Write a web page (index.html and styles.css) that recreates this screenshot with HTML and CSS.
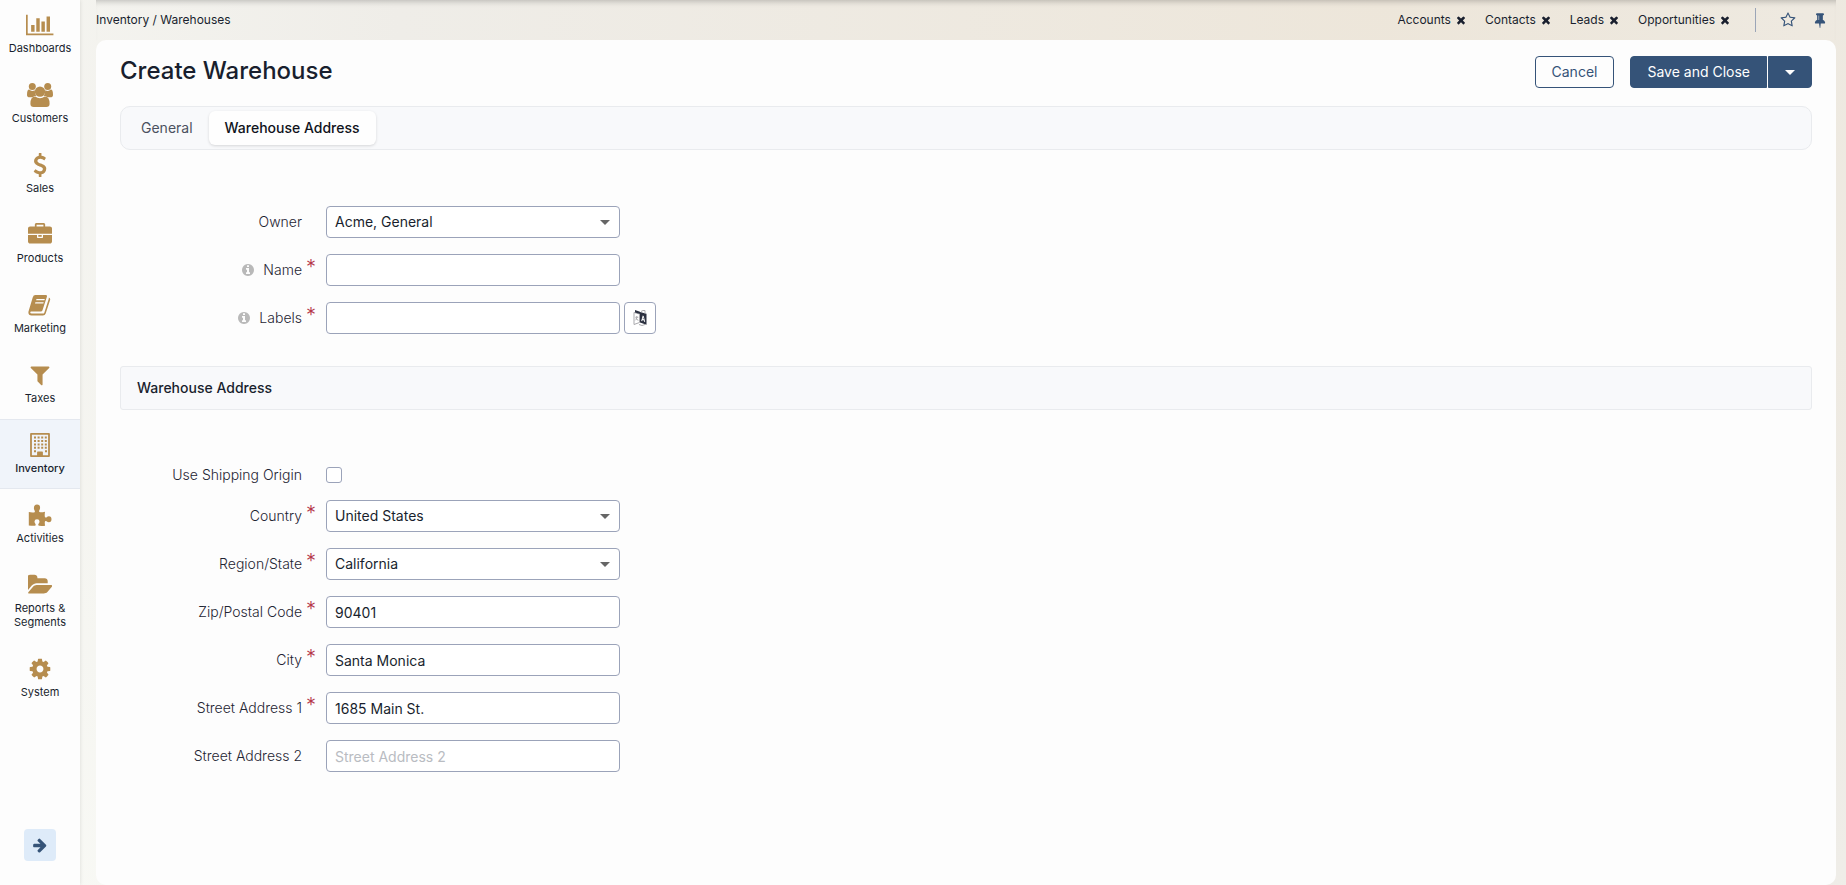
FILE: index.html
```html
<!DOCTYPE html>
<html lang="en">
<head>
    <meta charset="UTF-8">
    <meta name="viewport" content="width=device-width, initial-scale=1.0">
    <title>Create Warehouse</title>
    <link rel="stylesheet" href="styles.css">
</head>
<body>
    <!-- Icons used more than once -->
    <svg class="sprite" aria-hidden="true">
        <symbol id="times" viewBox="0 0 1792 1792"><path d="M1490 1322q0 40-28 68l-136 136q-28 28-68 28t-68-28l-294-294-294 294q-28 28-68 28t-68-28l-136-136q-28-28-28-68t28-68l294-294-294-294q-28-28-28-68t28-68l136-136q28-28 68-28t68 28l294 294 294-294q28-28 68-28t68 28l136 136q28 28 28 68t-28 68l-294 294 294 294q28 28 28 68z"/></symbol>
        <symbol id="info" viewBox="0 0 1792 1792"><path d="M1152 1376v-160q0-14-9-23t-23-9h-96v-512q0-14-9-23t-23-9h-320q-14 0-23 9t-9 23v160q0 14 9 23t23 9h96v320h-96q-14 0-23 9t-9 23v160q0 14 9 23t23 9h448q14 0 23-9t9-23zm-128-896v-160q0-14-9-23t-23-9h-192q-14 0-23 9t-9 23v160q0 14 9 23t23 9h192q14 0 23-9t9-23zm640 416q0 209-103 385.5t-279.5 279.5-385.5 103-385.5-103-279.5-279.5-103-385.5 103-385.5 279.5-279.5 385.5-103 385.5 103 279.5 279.5 103 385.5z"/></symbol>
    </svg>

    <nav class="sidebar">
        <ul class="menu">
            <li><a href="#" class="menu-item">
                <svg class="menu-icon" viewBox="0 0 2048 1792"><path d="M640 896v512h-256v-512h256zm384-512v1024h-256v-1024h256zm1024 1152v128h-2048v-1536h128v1408h1920zm-640-896v768h-256v-768h256zm384-384v1152h-256v-1152h256z"/></svg>
                <span>Dashboards</span>
            </a></li>
            <li><a href="#" class="menu-item">
                <svg class="menu-icon" viewBox="0 0 26 24"><circle cx="5.300" cy="3.600" r="3.500"/><circle cx="20.700" cy="3.600" r="3.500"/><path d="M2.200 6.600Q3.600 7.900 5.300 7.900q1.200 0 2.500-.6-.2 3.200 1.400 5.400-2 .1-3.600 1.600H2.700Q0 14.300 0 12 0 6.600 2.200 6.600zM23.800 6.600q-1.400 1.300-3.100 1.300-1.200 0-2.500-.6.200 3.200-1.400 5.400 2 .1 3.600 1.600h2.900q2.700 0 2.700-2.300 0-5.400-2.200-5.400z"/><circle cx="13" cy="8.600" r="5.200"/><path d="M8.300 13.500q2.200 1.800 4.700 1.800t4.700-1.800q4.900 0 4.900 7.300 0 3.200-3.300 3.200H6.700q-3.300 0-3.300-3.200 0-7.300 4.900-7.300z"/></svg>
                <span>Customers</span>
            </a></li>
            <li><a href="#" class="menu-item">
                <svg class="menu-icon" viewBox="0 0 1792 1792"><path d="M1362 1185q0 153-99.500 263.500t-258.500 136.500v175q0 14-9 23t-23 9h-135q-13 0-22.500-9.500t-9.500-22.500v-175q-66-9-127.500-31t-101.500-44.500-74-48-46.500-37.500-17.500-18q-17-21-2-41l103-135q7-10 23-12 15-2 24 9l2 2q113 99 243 125 37 8 74 8 81 0 142.500-43t61.500-122q0-28-15-53t-33.500-42-58.500-37.500-66-32-80-32.500q-39-16-61.500-25t-61.500-26.500-62.500-31-56.500-35.500-53.500-42.500-43.500-49-35.500-58-21-66.500-8.500-78q0-138 98-242t255-134v-180q0-13 9.500-22.500t22.500-9.500h135q14 0 23 9t9 23v176q57 6 110.500 23t87 33.500 63.500 37.500 39 29 15 14q17 18 5 38l-81 146q-8 15-23 16-14 3-27-7-3-3-14.500-12t-39-26.500-58.500-32-74.500-26-85.500-11.500q-95 0-155 43t-60 111q0 26 8.500 48t29.500 41.500 39.500 33 56 31 60.500 27 70 27.500q53 20 81 31.500t76 35 75.500 42.500 62 50 53 63.500 31.500 76.500 13 94z"/></svg>
                <span>Sales</span>
            </a></li>
            <li><a href="#" class="menu-item">
                <svg class="menu-icon" viewBox="0 0 1792 1792"><path d="M640 256h512v-128h-512v128zm1152 640v480q0 66-47 113t-113 47h-1472q-66 0-113-47t-47-113v-480h672v160q0 26 19 45t45 19h320q26 0 45-19t19-45v-160h672zm-768 0v128h-256v-128h256zm768-480v384h-1792v-384q0-66 47-113t113-47h352v-160q0-40 28-68t68-28h576q40 0 68 28t28 68v160h352q66 0 113 47t47 113z"/></svg>
                <span>Products</span>
            </a></li>
            <li><a href="#" class="menu-item">
                <svg class="menu-icon" viewBox="0 0 24 24"><path fill-rule="evenodd" d="M7.400 2h10.300q1.700 0 1.200 1.700l-4.400 13.600q-.4 1.200-1.800 1.200H3.200q-1 0-1 .8 0 1.300 1.600 1.300h11.200q1 0 1.300-.9L20.700 6q.2-.7.100-1.400 1.800.6 1.300 2.300l-4.400 13.500q-.7 2.100-2.800 2.100H3.600q-3.800 0-3.100-4.100L4.700 4.400Q5.400 2 7.400 2zM8.500 6l-.4 1.300h8.300l.4-1.300zM7.400 9.200 7 10.500h8.300l.4-1.300z"/></svg>
                <span>Marketing</span>
            </a></li>
            <li><a href="#" class="menu-item">
                <svg class="menu-icon" viewBox="0 0 1792 1792"><path d="M1595 295q17 41-14 70l-493 493v742q0 42-39 59-13 5-25 5-27 0-45-19l-256-256q-19-19-19-45v-486l-493-493q-31-29-14-70 17-39 59-39h1280q42 0 59 39z"/></svg>
                <span>Taxes</span>
            </a></li>
            <li><a href="#" class="menu-item active">
                <svg class="menu-icon" viewBox="0 0 24 24"><path fill-rule="evenodd" d="M3 0h18q.9 0 .9.900v22.200q0 .9-.9.900H3q-.9 0-.9-.900V.9Q2.100 0 3 0zM3.900 1.700v20.600h5.200v-3q0-.7.700-.7h4.400q.7 0 .7.700v3h5.200V1.700z"/><path class="windows" d="M6 4.600h13M6 8h13M6 11.400h13M6 14.800h13M6 18.200h2M17 18.200h2"/></svg>
                <span>Inventory</span>
            </a></li>
            <li><a href="#" class="menu-item">
                <svg class="menu-icon" viewBox="0 0 24 24"><path d="M.8 9.100q2.800.6 5.100.3 1.300-.2.900-1.500-.9-1.400-.9-2.600Q5.900 1.600 9 1.600t3.100 3.200q0 1.300-.9 2.600-.6 1.800 1.200 1.800 2.500 0 4.600-.5-.4 2.500-.2 4.800.1 1.400 1.600.9 1.300-1.100 2.500-1.100 2.600 0 2.600 3t-2.600 3q-1.300 0-2.300-1-1.700-.7-1.800 1-.1 1.700.3 3.400-3 .3-5.800.1-1.400-.2-.9-1.700 1.100-1.400 1.100-2.600 0-2.300-2.500-2.300t-2.500 2.300q0 1.300 1 2.600.6 1.600-.8 1.700-2.900.2-5.900-.4z"/></svg>
                <span>Activities</span>
            </a></li>
            <li><a href="#" class="menu-item">
                <svg class="menu-icon" viewBox="0 0 1856 1792"><path d="M1815 952q0 31-31 66l-336 396q-43 51-120.500 86.500t-143.500 35.500h-1088q-34 0-60.500-13t-26.500-43q0-31 31-66l336-396q43-51 120.500-86.500t143.500-35.500h1088q34 0 60.500 13t26.500 43zm-343-344v160h-832q-94 0-197 47.500t-164 119.500l-337 396-5 6q0-4-.5-12.500t-.5-12.500v-960q0-92 66-158t158-66h320q92 0 158 66t66 158v32h544q92 0 158 66t66 158z"/></svg>
                <span>Reports &amp; Segments</span>
            </a></li>
            <li><a href="#" class="menu-item">
                <svg class="menu-icon" viewBox="0 0 1792 1792"><path d="M1152 896q0-106-75-181t-181-75-181 75-75 181 75 181 181 75 181-75 75-181zm512-109v222q0 12-8 23t-20 13l-185 28q-19 54-39 91 35 50 107 138 10 12 10 25t-9 23q-27 37-99 108t-94 71q-12 0-26-9l-138-108q-44 23-91 38-16 136-29 186-7 28-36 28h-222q-14 0-24.500-8.500t-11.500-21.500l-28-184q-49-16-90-37l-141 107q-10 9-25 9-14 0-25-11-126-114-165-168-7-10-7-23 0-12 8-23 15-21 51-66.500t54-70.500q-27-50-41-99l-183-27q-13-2-21-12.500t-8-23.500v-222q0-12 8-23t19-13l186-28q14-46 39-92-40-57-107-138-10-12-10-24 0-10 9-23 26-36 98.500-107.500t94.500-71.500q13 0 26 10l138 107q44-23 91-38 16-136 29-186 7-28 36-28h222q14 0 24.500 8.500t11.500 21.500l28 184q49 16 90 37l142-107q9-9 24-9 13 0 25 10 129 119 165 170 7 8 7 22 0 12-8 23-15 21-51 66.500t-54 70.500q26 50 41 98l183 28q13 2 21 12.500t8 23.500z"/></svg>
                <span>System</span>
            </a></li>
        </ul>
        <button type="button" class="expand" aria-label="Expand menu">
            <svg viewBox="0 0 1792 1792"><path d="M1600 960q0 54-37 91l-651 651q-39 37-91 37-51 0-90-37l-75-75q-38-38-38-91t38-91l293-293h-704q-52 0-84.500-37.500t-32.500-90.500v-128q0-53 32.500-90.500t84.500-37.500h704l-293-294q-38-36-38-90t38-90l75-75q38-38 90-38 53 0 91 38l651 651q37 35 37 90z"/></svg>
        </button>
    </nav>

    <div class="page">
        <header class="topbar">
            <div class="breadcrumb"><a href="#">Inventory</a> / <a href="#">Warehouses</a></div>
            <div class="pins">
                <span class="pin"><a href="#">Accounts</a><button type="button" aria-label="Close Accounts"><svg><use href="#times"/></svg></button></span>
                <span class="pin"><a href="#">Contacts</a><button type="button" aria-label="Close Contacts"><svg><use href="#times"/></svg></button></span>
                <span class="pin"><a href="#">Leads</a><button type="button" aria-label="Close Leads"><svg><use href="#times"/></svg></button></span>
                <span class="pin"><a href="#">Opportunities</a><button type="button" aria-label="Close Opportunities"><svg><use href="#times"/></svg></button></span>
            </div>
            <div class="page-tools">
                <button type="button" aria-label="Favorite"><svg viewBox="0 0 1792 1792"><path d="M1201 1004l306-297-422-62-189-382-189 382-422 62 306 297-73 421 378-199 377 199zm527-357q0 22-26 48l-363 354 86 500q1 7 1 20 0 50-41 50-19 0-40-12l-449-236-449 236q-22 12-40 12-21 0-31.500-14.500t-10.500-35.500q0-6 2-20l86-500-364-354q-25-27-25-48 0-37 56-46l502-73 225-455q19-41 49-41t49 41l225 455 502 73q56 9 56 46z"/></svg></button>
                <button type="button" aria-label="Pin page"><svg viewBox="0 0 1792 1792"><path d="M800 864v-448q0-14-9-23t-23-9-23 9-9 23v448q0 14 9 23t23 9 23-9 9-23zm672 352q0 26-19 45t-45 19h-429l-51 483q-2 12-10.500 20.500t-20.500 8.500h-1q-27 0-32-27l-76-485h-404q-26 0-45-19t-19-45q0-123 78.500-221.500t177.500-98.500v-512q-52 0-90-38t-38-90 38-90 90-38h640q52 0 90 38t38 90-38 90-90 38v512q99 0 177.500 98.500t78.500 221.500z"/></svg></button>
            </div>
        </header>

        <main class="card">
            <div class="card-head">
                <h1>Create Warehouse</h1>
                <div class="actions">
                    <button type="button" class="btn">Cancel</button>
                    <div class="btn-group">
                        <button type="submit" form="warehouse" class="btn btn-primary">Save and Close</button>
                        <button type="button" class="btn btn-primary btn-toggle" aria-label="More save options"><span class="caret"></span></button>
                    </div>
                </div>
            </div>

            <div class="tabs">
                <a href="#general" class="tab">General</a>
                <a href="#address" class="tab active">Warehouse Address</a>
            </div>

            <form id="warehouse">
                <div class="fields" id="general">
                    <div class="row">
                        <label for="owner">Owner</label>
                        <select id="owner"><option>Acme, General</option></select>
                    </div>
                    <div class="row">
                        <label for="name" class="required"><svg class="info"><use href="#info"/></svg>Name</label>
                        <input type="text" id="name">
                    </div>
                    <div class="row">
                        <label for="labels" class="required"><svg class="info"><use href="#info"/></svg>Labels</label>
                        <input type="text" id="labels">
                        <button type="button" class="translate" aria-label="Translations">
                            <svg viewBox="0 0 16 18"><path class="sheet" d="M2 3.500 7.500 5v8.500L2 15.500zM7 15.500q3 2 6 0"/><path class="sheet" d="M3.300 8.300h3M4.800 7v1.300q0 2.200-1.500 3M4 9.300q.8 1.600 2.400 2"/><path d="M3 1l5 1.800V5L3 3.500z"/><path fill-rule="evenodd" d="M8 3l6.500 1.800v11L8 13.500zM10.700 6.600 9.200 12l1 .3.300-1.200 1.400.4.300 1.200 1 .3-1.500-6zM11.200 8.300l.5 2-1-.3z"/><path class="sheet" d="M9 2.500q2-1.500 4-1v3"/></svg>
                        </button>
                    </div>
                </div>

                <h2 class="section-title">Warehouse Address</h2>

                <div class="fields" id="address">
                    <div class="row row-check">
                        <label for="origin">Use Shipping Origin</label>
                        <input type="checkbox" id="origin">
                    </div>
                    <div class="row">
                        <label for="country" class="required">Country</label>
                        <select id="country"><option>United States</option></select>
                    </div>
                    <div class="row">
                        <label for="region" class="required">Region/State</label>
                        <select id="region"><option>California</option></select>
                    </div>
                    <div class="row">
                        <label for="zip" class="required">Zip/Postal Code</label>
                        <input type="text" id="zip" value="90401">
                    </div>
                    <div class="row">
                        <label for="city" class="required">City</label>
                        <input type="text" id="city" value="Santa Monica">
                    </div>
                    <div class="row">
                        <label for="street1" class="required">Street Address 1</label>
                        <input type="text" id="street1" value="1685 Main St.">
                    </div>
                    <div class="row">
                        <label for="street2">Street Address 2</label>
                        <input type="text" id="street2" placeholder="Street Address 2">
                    </div>
                </div>
            </form>
        </main>
    </div>
</body>
</html>
```
FILE: styles.css
```css
* {
    margin: 0;
    padding: 0;
    box-sizing: border-box;
}

body {
    display: flex;
    min-height: 100vh;
    background: radial-gradient(circle at 75% 0, #ede6da, #efede8 60%, #f9faf6 100%);
    color: #191f2e;
    font-family: Inter, "Liberation Sans", sans-serif;
    font-size: 14px;
    line-height: 20px;
}

a {
    color: inherit;
    text-decoration: none;
}

button,
input,
select {
    font: inherit;
    color: inherit;
}

button {
    border: none;
    background: none;
    cursor: pointer;
}

svg {
    fill: currentColor;
}

.sprite {
    position: absolute;
    width: 0;
    height: 0;
}

/* Sidebar */
.sidebar {
    display: flex;
    flex-direction: column;
    align-items: center;
    justify-content: space-between;
    flex-shrink: 0;
    width: 80px;
    padding-bottom: 24px;
    background: #fdfdfd;
    box-shadow: 0 0 4px rgba(0, 0, 0, 0.12);
}

.menu {
    width: 100%;
    margin-top: -1px;
    list-style: none;
}

.menu-item {
    display: flex;
    flex-direction: column;
    align-items: center;
    gap: 4px;
    padding: 13px 8px;
    border: solid transparent;
    border-width: 1px 0;
    font-size: 11px;
    line-height: 14px;
    text-align: center;
}

.menu-item.active {
    border-color: #e4e8ef;
    background: #f0f4fa;
    font-weight: 500;
}

.menu-icon {
    height: 24px;
    fill: #b68d4f;
}

.menu-icon .windows {
    fill: none;
    stroke: #b68d4f;
    stroke-width: 2;
    stroke-dasharray: 2 1.600;
}

.expand {
    width: 32px;
    height: 32px;
    border-radius: 4px;
    background: #deebf9;
    color: #355378;
}

.expand svg {
    display: block;
    width: 16px;
    margin: auto;
}

/* Top bar */
.page {
    display: flex;
    flex-direction: column;
    flex: 1;
    padding: 0 10px 0 16px;
}

.topbar {
    display: flex;
    align-items: center;
    height: 40px;
    font-size: 12px;
    box-shadow: inset 0 6px 6px -5px rgba(0, 0, 0, 0.25);
}

.pins {
    display: flex;
    gap: 18px;
    margin-left: auto;
}

.pin {
    display: flex;
    align-items: center;
    gap: 4px;
}

.pin svg {
    display: block;
    width: 12px;
    height: 12px;
}

.page-tools {
    display: flex;
    align-items: center;
    gap: 16px;
    height: 24px;
    margin-left: 24px;
    padding: 0 8px 0 24px;
    border-left: 1px solid #9ba5b7;
}

.page-tools button {
    color: #355378;
}

.page-tools svg {
    display: block;
    width: 16px;
}

/* Card */
.card {
    flex: 1;
    padding: 16px 24px;
    border-radius: 10px;
    background: #fdfdfd;
}

.card-head {
    display: flex;
    justify-content: space-between;
    height: 32px;
    margin-bottom: 18px;
}

h1 {
    font-size: 24px;
    font-weight: 500;
    line-height: 30px;
}

.actions {
    display: flex;
    gap: 16px;
}

.btn {
    height: 32px;
    padding: 0 16px;
    border: 1px solid #355378;
    border-radius: 4px;
    color: #355378;
}

.btn-group {
    display: flex;
    gap: 1px;
}

.btn-primary {
    border-radius: 4px 0 0 4px;
    background: #355378;
    color: #fff;
}

.btn-toggle {
    display: flex;
    align-items: center;
    border-radius: 0 4px 4px 0;
}

.caret {
    border: 5px solid transparent;
    border-top-color: #fff;
    border-bottom: none;
}

.tabs {
    display: flex;
    padding: 4px;
    border: 1px solid #e9ebee;
    border-radius: 10px;
    background: #f8f9fb;
}

.tab {
    padding: 7px 16px;
    border-radius: 6px;
    color: #4b5160;
}

.tab.active {
    background: #fefefe;
    box-shadow: 0 1px 3px rgba(0, 0, 0, 0.14);
    color: #10131c;
    font-weight: 500;
}

/* Form */
.fields {
    display: flex;
    flex-direction: column;
    gap: 16px;
    padding: 56px 0 32px;
}

.row {
    display: flex;
    align-items: center;
    height: 32px;
}

.row label {
    display: flex;
    align-items: center;
    justify-content: flex-end;
    position: relative;
    width: 182px;
    margin-right: 24px;
    color: #1f2533;
    font-weight: 300;
}

.row label.required::after {
    content: "*";
    position: absolute;
    left: 100%;
    bottom: 3px;
    margin-left: 4px;
    color: #b5374a;
    font-size: 20px;
}

.info {
    width: 14px;
    height: 14px;
    margin-right: 8px;
    fill: #b9b9b9;
}

input[type="text"],
select {
    width: 294px;
    height: 32px;
    padding: 0 8px;
    border: 1px solid #9ba3b9;
    border-radius: 4px;
    background: #fff;
}

select {
    appearance: none;
    background: #fff url('data:image/svg+xml,<svg xmlns="http://www.w3.org/2000/svg" width="10" height="5"><path d="M0 0h10L5 5z" fill="%23666"/></svg>') no-repeat right 9px center;
}

input::placeholder {
    color: #b9bcc2;
}

.row-check {
    height: 18px;
}

input[type="checkbox"] {
    appearance: none;
    width: 16px;
    height: 16px;
    border: 1px solid #9ba3b9;
    border-radius: 3px;
    background: #fff;
}

.translate {
    width: 32px;
    height: 32px;
    margin-left: 4px;
    border: 1px solid #9ba3b9;
    border-radius: 4px;
    background: #fff;
}

.translate svg {
    display: block;
    width: 16px;
    margin: auto;
    fill: #2b3040;
}

.translate .sheet {
    fill: none;
    stroke: #a9a9ad;
    stroke-width: 1;
}

.section-title {
    padding: 11px 16px;
    border: 1px solid #e9ebee;
    border-radius: 3px;
    background: #f8f9fb;
    font-size: 14px;
    font-weight: 500;
}
```
